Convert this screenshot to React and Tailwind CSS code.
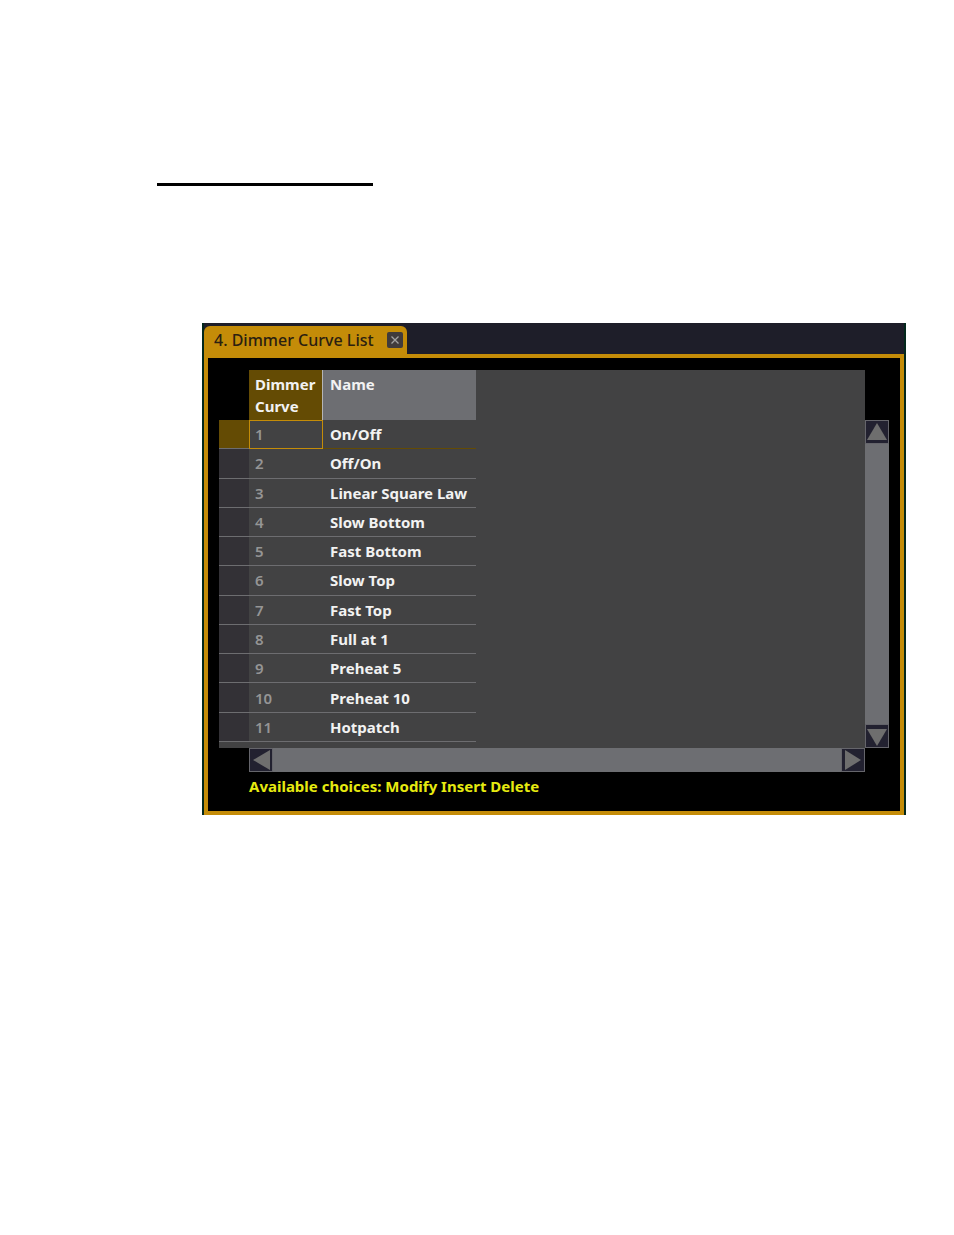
import clsx from "clsx";

const curves = [
  "On/Off",
  "Off/On",
  "Linear Square Law",
  "Slow Bottom",
  "Fast Bottom",
  "Slow Top",
  "Fast Top",
  "Full at 1",
  "Preheat 5",
  "Preheat 10",
  "Hotpatch",
];

const arrows = {
  up: "M11 2 L21 19 H1 Z",
  down: "M1 4 H21 L11 21 Z",
  left: "M3 11 L20 1 V21 Z",
  right: "M19 11 L3 1 V21 Z",
};

const ScrollButton = ({ direction, className }) => (
  <button
    type="button"
    aria-label={`Scroll ${direction}`}
    className={clsx("size-6 shrink-0 border border-[#65656b] bg-[#222130]", className)}
  >
    <svg viewBox="0 0 22 22" className="size-full" fill="#6e6e6e">
      <path d={arrows[direction]} />
    </svg>
  </button>
);

const Tab = () => (
  <div className="flex h-7 w-[203px] items-center justify-between rounded-t-md bg-[#c48c08] pl-[10px] pr-1">
    <span className="whitespace-nowrap text-base font-medium text-[#2b2010]">
      4. Dimmer Curve List
    </span>
    <button
      type="button"
      aria-label="Close tab"
      className="flex size-4 items-center justify-center rounded-xs bg-[#403b3c]"
    >
      <svg viewBox="0 0 16 16" className="size-4" stroke="#a3a3a3" strokeWidth="1.3">
        <path d="M4.5 4.5 L11.5 11.5 M11.5 4.5 L4.5 11.5" />
      </svg>
    </button>
  </div>
);

const CurveTable = () => (
  <table className="h-[372px] w-[257px] table-fixed border-separate border-spacing-0 text-left text-[15px] leading-[22px] font-bold text-[#f2f2f2]">
    <colgroup>
      <col className="w-[30px]" />
      <col className="w-[74px]" />
      <col className="w-[153px]" />
    </colgroup>
    <thead>
      <tr className="h-[50px] align-top">
        <td className="bg-black" />
        <th className="border-r border-[#b5b5b5] bg-[#644b04] pl-[6px] pt-[3px]">
          Dimmer Curve
        </th>
        <th className="bg-[#6d6e72] pl-[7px] pt-[3px]">Name</th>
      </tr>
    </thead>
    <tbody>
      {curves.map((name, i) => {
        const selected = i === 0;
        return (
          <tr key={name}>
            <td
              className={clsx(
                "border-b border-[#6d6d70]",
                selected ? "bg-[#644b04]" : "bg-[#333136]"
              )}
            />
            <td
              className={clsx(
                "border-b border-[#6d6d70] pl-[6px] font-semibold text-[#959595]",
                selected && "outline -outline-offset-1 outline-[#c48c08]"
              )}
            >
              {i + 1}
            </td>
            <td
              className={clsx(
                "whitespace-nowrap border-b pl-[7px]",
                selected ? "border-[#644b04]" : "border-[#6d6d70]"
              )}
            >
              {name}
            </td>
          </tr>
        );
      })}
    </tbody>
  </table>
);

const App = () => {
  return (
    <main className="pt-[183px] pr-12 font-['Noto_Sans',sans-serif]">
      <hr className="ml-[157px] w-[216px] border-0 border-t-3 border-black" />

      <section className="mt-[137px] ml-[202px] border-x-2 border-[#03281c] bg-[#1e1e29] pt-[3px]">
        <Tab />
        <div className="border-4 border-[#c48c08] bg-black px-[11px] pt-3 pb-[14px]">
          <div className="flex">
            <div className="flex-1 bg-[#424243] pb-[6px]">
              <CurveTable />
            </div>
            <div className="mt-[50px] flex w-6 flex-col justify-between bg-[#6d6e72]">
              <ScrollButton direction="up" />
              <ScrollButton direction="down" />
            </div>
          </div>
          <div className="mr-6 ml-[30px] flex justify-between bg-[#6d6e72]">
            <ScrollButton direction="left" />
            <ScrollButton direction="right" />
          </div>
          <p className="ml-[30px] pt-[3px] text-[15px] leading-[22px] font-bold text-[#e6ea10]">
            Available choices: Modify Insert Delete
          </p>
        </div>
      </section>
    </main>
  );
};

export default App;
